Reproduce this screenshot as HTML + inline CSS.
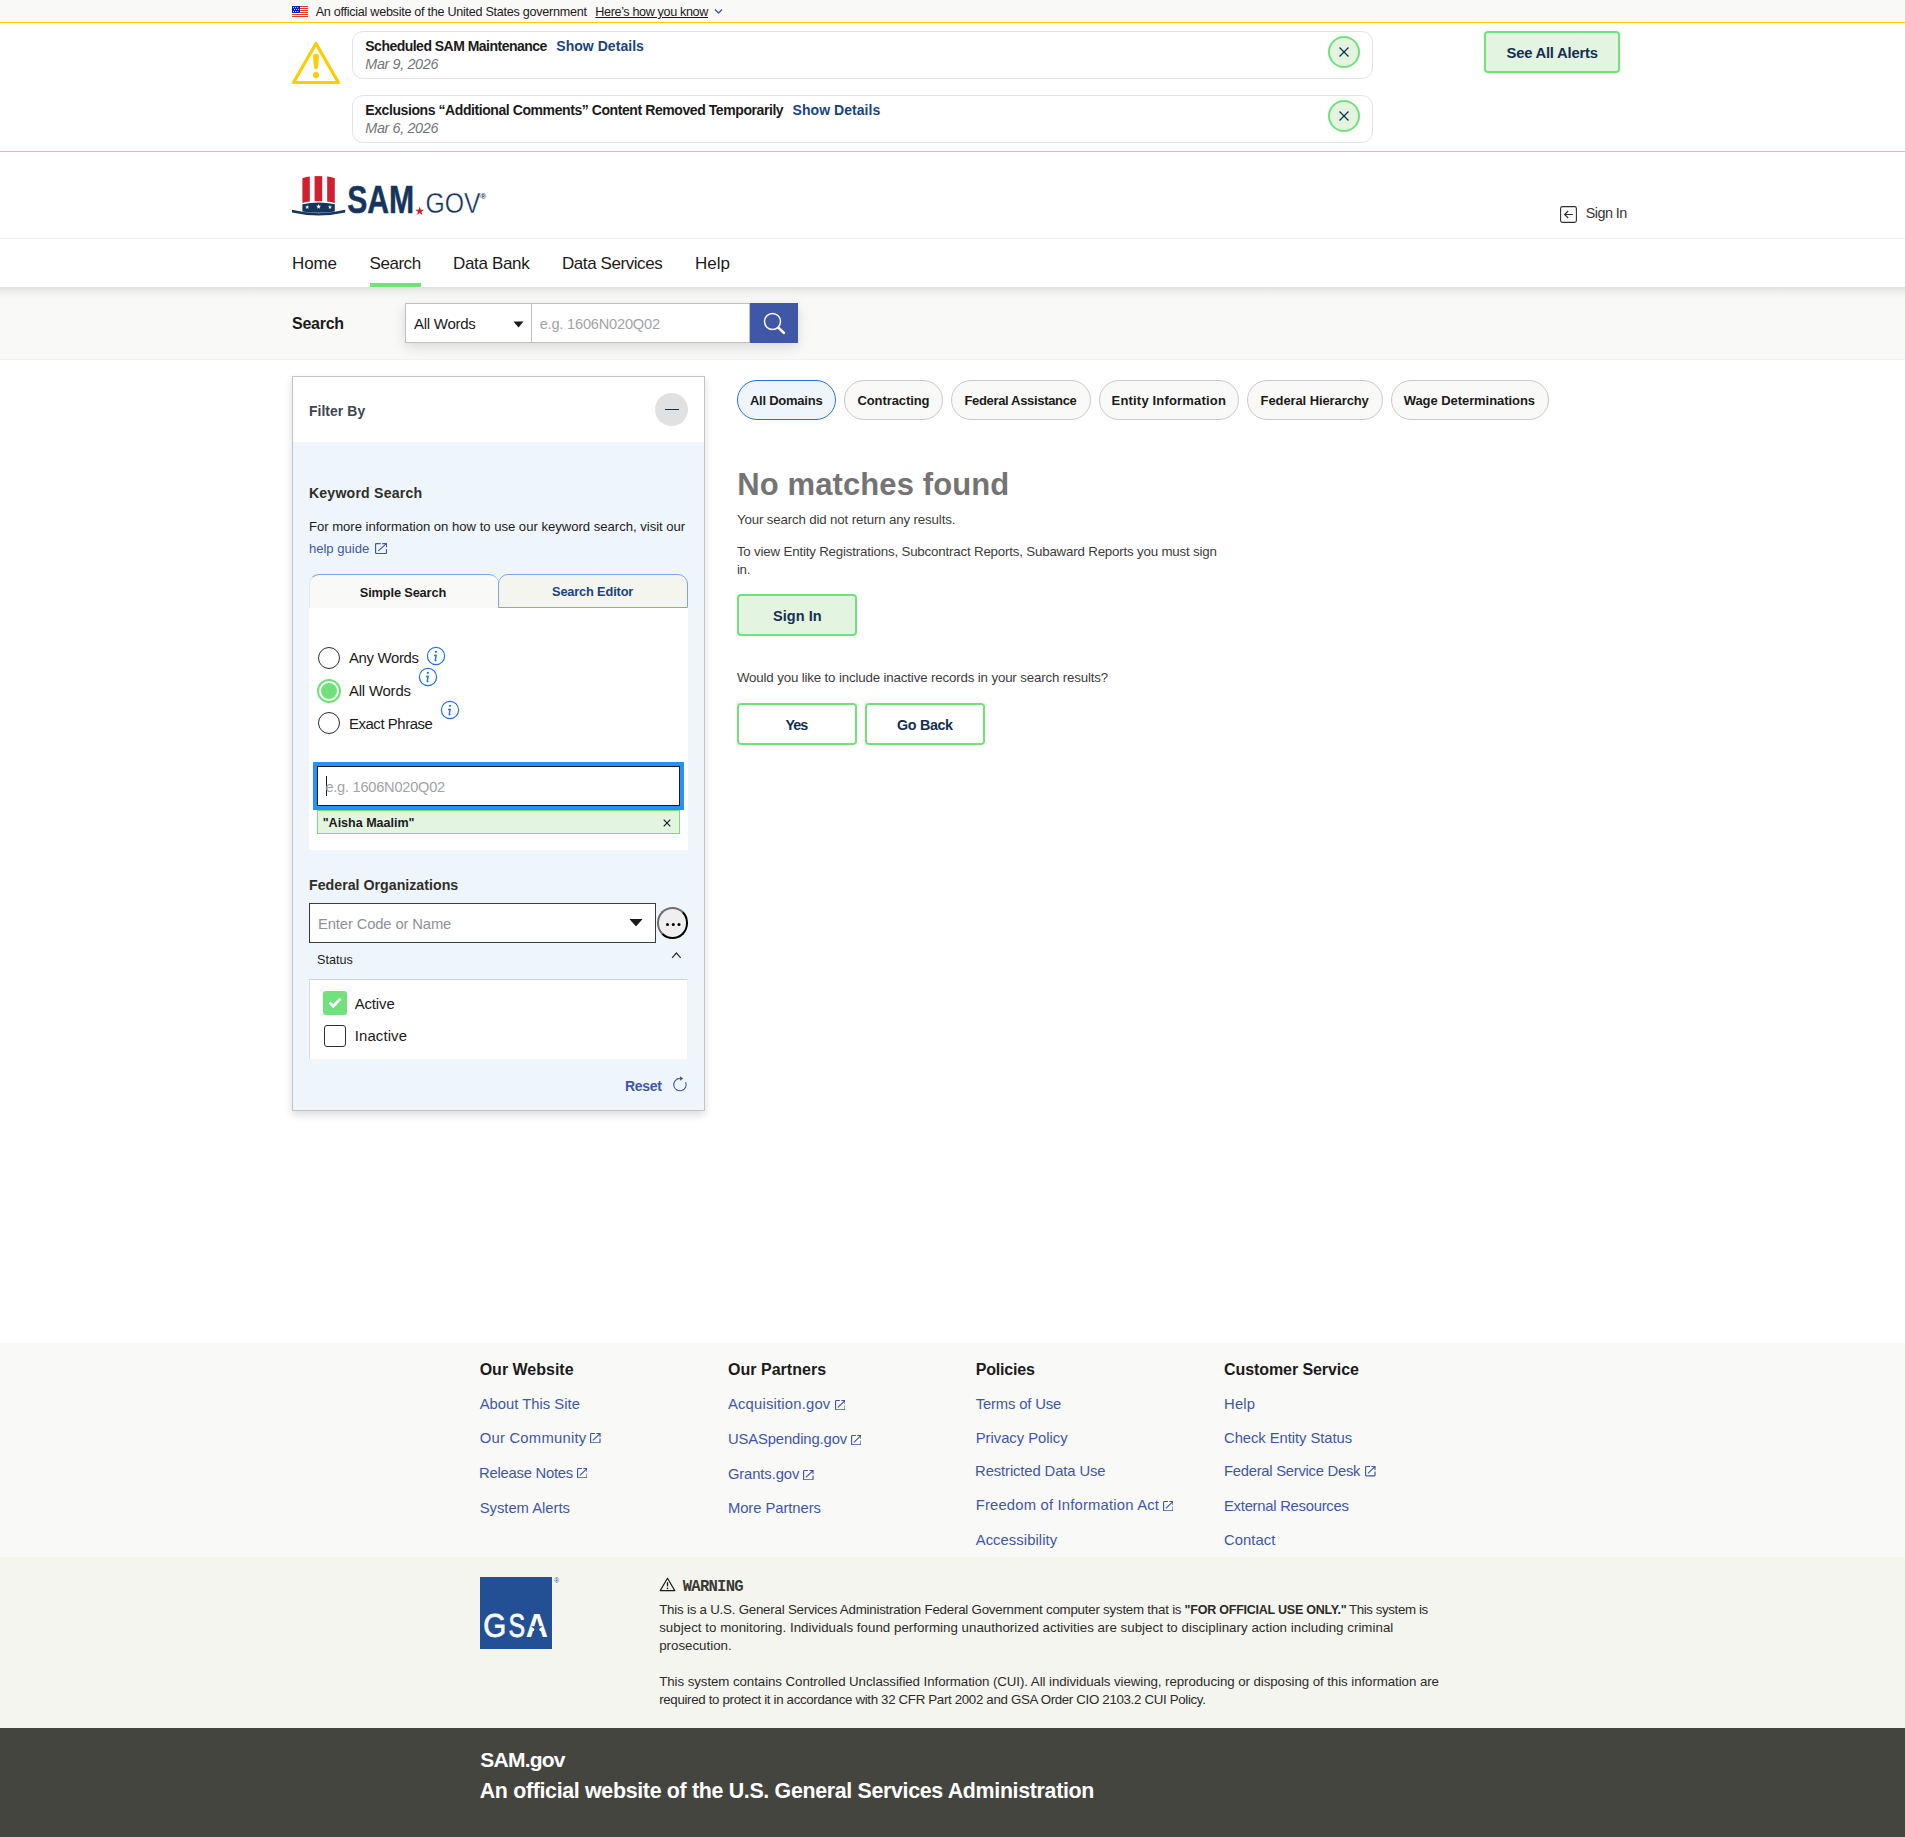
<!DOCTYPE html>
<html lang="en">
<head>
<meta charset="utf-8">
<title>SAM.gov | Search</title>
<style>
*{box-sizing:border-box;margin:0;padding:0}
html,body{width:1905px;height:1837px;overflow:hidden;background:#fff}
body{position:relative;font-family:"Liberation Sans",sans-serif;color:#1b1b1b;font-size:15px;line-height:1}
.a{position:absolute;white-space:nowrap}
.b{font-weight:bold}
.i{font-style:italic}
svg{display:block}
/* banner */
#gov{left:0;top:0;width:1905px;height:22px;background:#f9f9f7}
#govline{left:0;top:22px;width:1905px;height:1px;background:#face00}
#alertline{left:0;top:151px;width:1905px;height:1px;background:#face00}
.alertbox{left:352px;width:1021px;height:48px;border:1px solid #e4e4e4;border-radius:11px;background:#fff}
.xbtn{width:32px;height:32px;border-radius:50%;border:2px solid #70e17b;background:#e3f5e1}
.gbtn{border:2px solid #70e17b;background:#e3f5e1;border-radius:4px;color:#162e51;font-weight:bold;text-align:center}
.wbtn{border:2px solid #70e17b;background:#fff;border-radius:4px;color:#162e51;font-weight:bold;text-align:center}
/* nav */
#hdrline{left:0;top:238px;width:1905px;height:1px;background:#f2f2ef}
#navshadow{left:0;top:287px;width:1905px;height:12px;background:linear-gradient(#e0e0de 0,#eaeae8 28%,#f3f3f1 60%,#f9f9f7 100%)}
#sbar{left:0;top:287px;width:1905px;height:73px;background:#f9f9f7;border-bottom:1px solid #f3f3ee}
.nav{top:254px;font-size:17px;color:#1b1b1b}
.pill{top:380px;height:40px;border-radius:20px;border:1px solid #c9c9c9;background:#f9f9f7}
.pt{font-size:13px;color:#1b1b1b}
.fh{font-size:16px;color:#1b1b1b}
.fl{font-size:14.8px;color:#3f57a6}
.ft{font-size:13.3px;color:#2b2b28}
</style>
</head>
<body>
<!-- ===== gov banner ===== -->
<div class="a" id="gov"></div>
<div class="a" id="govline"></div>
<svg class="a" style="left:292px;top:6px" width="16" height="11" viewBox="0 0 16 11"><rect width="16" height="11" fill="#fff"/><g fill="#db3e1f"><rect y="0" width="16" height="1"/><rect y="2" width="16" height="1"/><rect y="4" width="16" height="1"/><rect y="6" width="16" height="1"/><rect y="8" width="16" height="1"/><rect y="10" width="16" height="1"/></g><rect width="8" height="7" fill="#0b1fae"/><circle cx="1.5" cy="1.6" r="0.55" fill="#fff"/><circle cx="3.6" cy="1.6" r="0.55" fill="#fff"/><circle cx="5.7" cy="1.6" r="0.55" fill="#fff"/><circle cx="2.5" cy="3.5" r="0.55" fill="#fff"/><circle cx="4.6" cy="3.5" r="0.55" fill="#fff"/><circle cx="6.6" cy="3.5" r="0.55" fill="#fff"/><circle cx="1.5" cy="5.5" r="0.55" fill="#fff"/><circle cx="3.6" cy="5.5" r="0.55" fill="#fff"/><circle cx="5.7" cy="5.5" r="0.55" fill="#fff"/></svg>
<span class="a" id="t_gov" style="font-size:12.6px;left:315.7px;top:6.0px;letter-spacing:-0.27px">An official website of the United States government</span>
<span class="a" id="t_how" style="font-size:12.6px;text-decoration:underline;left:595.3px;top:6.0px;letter-spacing:-0.36px">Here’s how you know</span>
<svg class="a" style="left:714px;top:8px" width="9" height="7" viewBox="0 0 9 7"><path d="M1 1.5 L4.5 5 L8 1.5" fill="none" stroke="#3f57a6" stroke-width="1.3"/></svg>

<!-- ===== alerts ===== -->
<div class="a" id="alertline"></div>
<svg class="a" style="left:291px;top:41px" width="50" height="44" viewBox="0 0 50 44"><path d="M25 2.5 L47.4 41.5 H2.5 Z" fill="none" stroke="#face00" stroke-width="3.2" stroke-linejoin="round"/><path d="M22 15.6 Q22 12.7 25 12.7 Q28 12.7 28 15.6 L27 26.4 Q26.9 28.2 25 28.2 Q23.1 28.2 23 26.4 Z" fill="#face00"/><circle cx="25" cy="34.1" r="3.1" fill="#face00"/></svg>
<div class="a alertbox" style="top:31px"></div>
<div class="a alertbox" style="top:95px"></div>
<span class="a b" id="t_al1" style="font-size:14px;left:365.3px;top:39.0px;letter-spacing:-0.52px">Scheduled SAM Maintenance</span>
<span class="a b" id="t_sd1" style="font-size:14px;color:#1a4480;left:556.3px;top:39.0px;letter-spacing:0.04px">Show Details</span>
<span class="a i" id="t_d1" style="font-size:14.4px;color:#71767a;left:365.3px;top:57.0px;letter-spacing:-0.37px">Mar 9, 2026</span>
<span class="a b" id="t_al2" style="font-size:14px;left:365.3px;top:103.0px;letter-spacing:-0.42px">Exclusions “Additional Comments” Content Removed Temporarily</span>
<span class="a b" id="t_sd2" style="font-size:14px;color:#1a4480;left:792.6px;top:103.0px;letter-spacing:0.04px">Show Details</span>
<span class="a i" id="t_d2" style="font-size:14.4px;color:#71767a;left:365.3px;top:121.0px;letter-spacing:-0.37px">Mar 6, 2026</span>
<div class="a xbtn" style="left:1328px;top:36px"></div>
<div class="a xbtn" style="left:1328px;top:100px"></div>
<svg class="a" style="left:1338px;top:46px" width="12" height="12" viewBox="0 0 12 12"><path d="M1.5 1.5 L10.5 10.5 M10.5 1.5 L1.5 10.5" stroke="#162e51" stroke-width="1.3"/></svg>
<svg class="a" style="left:1338px;top:110px" width="12" height="12" viewBox="0 0 12 12"><path d="M1.5 1.5 L10.5 10.5 M10.5 1.5 L1.5 10.5" stroke="#162e51" stroke-width="1.3"/></svg>
<div class="a gbtn" style="left:1484px;top:31px;width:136px;height:42px"></div>
<span class="a b" id="t_see" style="font-size:14.8px;color:#162e51;left:1506.5px;top:46.0px;letter-spacing:-0.22px">See All Alerts</span>

<!-- ===== header ===== -->
<svg class="a" style="left:288px;top:170px" width="210" height="52" viewBox="288 170 210 52">
<path d="M302.4 178.2 Q306 177 309.8 176.6 V201.6 Q306 201.8 302.4 203 Z" fill="#d01f2e"/>
<path d="M314.6 176.1 H322.2 V201.3 H314.6 Z" fill="#d01f2e"/>
<path d="M327.2 176.6 Q331 177 334.8 178.2 V203 Q331 201.8 327.2 201.6 Z" fill="#d01f2e"/>
<path d="M302.4 204.2 Q318.6 200.6 334.8 204.2 V211.4 Q318.6 214.2 302.4 211.4 Z" fill="#15355c"/>
<path d="M292 209.8 Q318.6 216.6 345.2 209.8 V212.6 Q318.6 218.6 292 212.6 Z" fill="#15355c"/>
<path d="M307.20 205.00 L307.72 206.49 L309.29 206.52 L308.04 207.47 L308.49 208.98 L307.20 208.08 L305.91 208.98 L306.36 207.47 L305.11 206.52 L306.68 206.49 Z" fill="#fff"/> <path d="M318.60 204.00 L319.21 205.76 L321.07 205.80 L319.59 206.92 L320.13 208.70 L318.60 207.64 L317.07 208.70 L317.61 206.92 L316.13 205.80 L317.99 205.76 Z" fill="#fff"/> <path d="M330.00 205.00 L330.52 206.49 L332.09 206.52 L330.84 207.47 L331.29 208.98 L330.00 208.08 L328.71 208.98 L329.16 207.47 L327.91 206.52 L329.48 206.49 Z" fill="#fff"/>
<text x="347.2" y="212.6" font-family="'Liberation Sans',sans-serif" font-weight="bold" font-size="39.7" fill="#15355c" stroke="#15355c" stroke-width="0.5" textLength="67" lengthAdjust="spacingAndGlyphs">SAM</text>
<path d="M419.70 206.60 L420.78 209.71 L424.07 209.78 L421.45 211.77 L422.40 214.92 L419.70 213.04 L417.00 214.92 L417.95 211.77 L415.33 209.78 L418.62 209.71 Z" fill="#d01f2e"/>
<text x="425.6" y="212.6" font-family="'Liberation Sans',sans-serif" font-size="30.4" fill="#15355c" stroke="#fff" stroke-width="0.35" textLength="55" lengthAdjust="spacingAndGlyphs">GOV</text>
<text x="480.2" y="199.4" font-family="'Liberation Sans',sans-serif" font-weight="bold" font-size="8" fill="#15355c">®</text>
</svg>
<svg class="a" style="left:1560px;top:206px" width="17" height="17" viewBox="0 0 17 17"><rect x="0.6" y="0.6" width="15.8" height="15.8" rx="1.8" fill="#fff" stroke="#2e2e2e" stroke-width="1.1"/><path d="M12.9 8.5 H4.6 M8.2 5 L4.6 8.5 L8.2 12" fill="none" stroke="#2e2e2e" stroke-width="1.1"/></svg>
<span class="a" id="t_signin" style="color:#363636;font-size:14.4px;left:1585.8px;top:206.0px;letter-spacing:-0.57px">Sign In</span>
<div class="a" id="hdrline"></div>

<!-- ===== nav ===== -->
<span class="a nav" id="t_n1" style="left:292.0px;top:255.0px;letter-spacing:-0.09px">Home</span>
<span class="a nav" id="t_n2" style="left:369.6px;top:255.0px;letter-spacing:-0.47px">Search</span>
<span class="a nav" id="t_n3" style="left:453.0px;top:255.0px;letter-spacing:-0.34px">Data Bank</span>
<span class="a nav" id="t_n4" style="left:562.0px;top:255.0px;letter-spacing:-0.43px">Data Services</span>
<span class="a nav" id="t_n5" style="left:695.0px;top:255.0px;letter-spacing:0.01px">Help</span>
<div class="a" style="left:370px;top:283px;width:51px;height:4px;background:#70e17b"></div>

<!-- ===== search bar ===== -->
<div class="a" id="sbar"></div>
<div class="a" id="navshadow"></div>
<span class="a b" id="t_slabel" style="font-size:16px;left:292.0px;top:316.0px;letter-spacing:-0.26px">Search</span>
<div class="a" style="left:405px;top:303px;width:393px;height:40px;box-shadow:0 4px 12px rgba(0,0,0,.13);background:#fff"></div>
<div class="a" style="left:405px;top:303px;width:127px;height:40px;border:1px solid #bfbfbf;background:#fff"></div>
<div class="a" style="left:531px;top:303px;width:219px;height:40px;border:1px solid #bfbfbf;background:#fff"></div>
<div class="a" style="left:750px;top:303px;width:48px;height:40px;background:#3f57a6"></div>
<span class="a" id="t_allw" style="font-size:15px;left:413.9px;top:316.0px;letter-spacing:-0.24px">All Words</span>
<svg class="a" style="left:513px;top:321px" width="11" height="7" viewBox="0 0 11 7"><path d="M0.5 0.5 H10.5 L5.5 6.5 Z" fill="#1b1b1b"/></svg>
<span class="a" id="t_ph1" style="font-size:14.6px;color:#a0a4a7;left:539.7px;top:317.0px;letter-spacing:-0.20px">e.g. 1606N020Q02</span>
<svg class="a" style="left:762px;top:311px" width="24" height="24" viewBox="0 0 24 24"><circle cx="10.5" cy="10.5" r="8" fill="none" stroke="#fff" stroke-width="1.5"/><path d="M16.3 16.6 L21.9 21.9" stroke="#fff" stroke-width="2.6" stroke-linecap="round"/></svg>

<!-- ===== filter panel ===== -->
<div class="a" style="left:292px;top:376px;width:413px;height:735px;border:1px solid #c4c4c4;background:#eff6fb;box-shadow:0 4px 8px rgba(0,0,0,.14)"></div>
<div class="a" style="left:293px;top:377px;width:411px;height:65px;background:#fff"></div>
<span class="a b" id="t_filterby" style="font-size:13.9px;color:#3d4551;left:308.9px;top:405.0px;letter-spacing:0.08px">Filter By</span>
<div class="a" style="left:655px;top:393px;width:33px;height:33px;border-radius:50%;background:#e1e1e1"></div>
<div class="a" style="left:665px;top:408.9px;width:14px;height:1.1px;background:#162e51"></div>
<span class="a b" id="t_kw" style="font-size:14.1px;color:#2e2e2a;left:308.9px;top:486.0px;letter-spacing:0.22px">Keyword Search</span>
<span class="a" id="t_formore" style="font-size:13.1px;left:308.9px;top:520.0px;letter-spacing:-0.01px">For more information on how to use our keyword search, visit our</span>
<span class="a" id="t_helpguide" style="font-size:13.1px;color:#3f57a6;left:308.9px;top:542.0px;letter-spacing:-0.00px">help guide</span>
<svg class="a" style="left:375px;top:542.9px" width="12.1" height="11.1" viewBox="0 0 12.1 11.1"><path d="M5.69 0.57 H1.48 Q0.57 0.57 0.57 1.48 V9.62 Q0.57 10.53 1.48 10.53 H10.62 Q11.53 10.53 11.53 9.62 V5.88" fill="none" stroke="#3f57a6" stroke-width="1.15"/><path d="M7.26 0.57 H11.53 V4.22 M11.43 0.67 L3.27 7.88" fill="none" stroke="#3f57a6" stroke-width="1.15"/></svg>
<!-- tabs -->
<div class="a" style="left:309px;top:574px;width:190px;height:34px;background:#f9f9f7;border-top:1px solid #7aa6ee;border-left:1px solid #dbe6f7;border-radius:10px 10px 0 0"></div>
<div class="a" style="left:498px;top:574px;width:190px;height:34px;background:#f5f5f0;border:1px solid #7aa6ee;border-radius:10px 10px 0 0"></div>
<span class="a b" id="t_simple" style="font-size:12.8px;left:359.8px;top:587.0px;letter-spacing:-0.15px">Simple Search</span>
<span class="a b" id="t_editor" style="font-size:12.8px;color:#1a4480;left:552.0px;top:586.0px;letter-spacing:-0.16px">Search Editor</span>
<div class="a" style="left:309px;top:608px;width:379px;height:242px;background:#fff"></div>
<!-- radios -->
<div class="a" style="left:318px;top:647px;width:22px;height:22px;border-radius:50%;border:1.3px solid #2e2e2e;background:#fff"></div>
<div class="a" style="left:317px;top:679px;width:24px;height:24px;border-radius:50%;border:2px solid #70e17b;background:#fff"></div>
<div class="a" style="left:321px;top:683px;width:16px;height:16px;border-radius:50%;background:#70e17b"></div>
<div class="a" style="left:318px;top:712px;width:22px;height:22px;border-radius:50%;border:1.3px solid #2e2e2e;background:#fff"></div>
<span class="a" id="t_any" style="font-size:14.9px;left:349.0px;top:651.0px;letter-spacing:-0.32px">Any Words</span>
<span class="a" id="t_all" style="font-size:14.9px;left:349.0px;top:684.0px;letter-spacing:-0.19px">All Words</span>
<span class="a" id="t_exact" style="font-size:14.9px;left:349.0px;top:717.0px;letter-spacing:-0.43px">Exact Phrase</span>
<svg class="a" style="left:426.2px;top:646.2px" width="20" height="20" viewBox="0 0 20 20"><circle cx="10" cy="10" r="8.6" fill="none" stroke="#2672de" stroke-width="1.2"/><circle cx="9.95" cy="5.8" r="1.1" fill="#2672de"/><path d="M8.7 9.5 L10.2 9.1 L9.2 14.3 Q9.2 15 10 14.5" fill="none" stroke="#2672de" stroke-width="1.4" stroke-linecap="round" stroke-linejoin="round"/></svg>
<svg class="a" style="left:418.3px;top:667.2px" width="20" height="20" viewBox="0 0 20 20"><circle cx="10" cy="10" r="8.6" fill="none" stroke="#2672de" stroke-width="1.2"/><circle cx="9.95" cy="5.8" r="1.1" fill="#2672de"/><path d="M8.7 9.5 L10.2 9.1 L9.2 14.3 Q9.2 15 10 14.5" fill="none" stroke="#2672de" stroke-width="1.4" stroke-linecap="round" stroke-linejoin="round"/></svg>
<svg class="a" style="left:440.4px;top:700.3px" width="20" height="20" viewBox="0 0 20 20"><circle cx="10" cy="10" r="8.6" fill="none" stroke="#2672de" stroke-width="1.2"/><circle cx="9.95" cy="5.8" r="1.1" fill="#2672de"/><path d="M8.7 9.5 L10.2 9.1 L9.2 14.3 Q9.2 15 10 14.5" fill="none" stroke="#2672de" stroke-width="1.4" stroke-linecap="round" stroke-linejoin="round"/></svg>
<!-- focused input -->
<div class="a" style="left:313px;top:762px;width:371px;height:48px;background:#2491ff"></div>
<div class="a" style="left:317px;top:766px;width:363px;height:40px;border:1px solid #1b1b1b;background:#fff"></div>
<div class="a" style="left:326px;top:776px;width:1px;height:20px;background:#1b1b1b"></div>
<span class="a" id="t_ph2" style="font-size:14.6px;color:#a0a4a7;left:325.4px;top:780.0px;letter-spacing:-0.24px">e.g. 1606N020Q02</span>
<div class="a" style="left:317px;top:810px;width:363px;height:24px;background:#e3f5e1;border:1px solid #70e17b"></div>
<span class="a b" id="t_chip" style="font-size:12.5px;left:322.7px;top:817.0px;letter-spacing:0.00px">"Aisha Maalim"</span>
<svg class="a" style="left:663px;top:819px" width="8" height="8" viewBox="0 0 8 8"><path d="M0.7 0.7 L7.3 7.3 M7.3 0.7 L0.7 7.3" stroke="#1b1b1b" stroke-width="1.2"/></svg>
<!-- federal orgs -->
<span class="a b" id="t_fedorg" style="font-size:14.2px;color:#2e2e2a;left:309.0px;top:878.0px;letter-spacing:0.01px">Federal Organizations</span>
<div class="a" style="left:309px;top:903px;width:347px;height:40px;border:1px solid #3d3d38;background:#fff"></div>
<span class="a" id="t_entercode" style="font-size:14.8px;color:#8d9297;left:318.0px;top:917.0px;letter-spacing:-0.14px">Enter Code or Name</span>
<svg class="a" style="left:629px;top:917.8px" width="14" height="9" viewBox="0 0 14 9"><path d="M1 1 H13 Q13.6 1 13.2 1.5 L7.4 8 Q7 8.4 6.6 8 L0.8 1.5 Q0.4 1 1 1 Z" fill="#1b1b1b"/></svg>
<div class="a" style="left:657px;top:907px;width:31px;height:31.5px;border-radius:50%;border:2px solid;border-color:#6e6e6e #000 #000 #6e6e6e;background:#efefef"></div>
<div class="a" style="left:665.9px;top:922.5px;width:3.2px;height:3.2px;border-radius:50%;background:#000;box-shadow:5.75px 0 0 #000,11.5px 0 0 #000"></div>
<span class="a" id="t_status" style="font-size:12.6px;left:317.1px;top:954.0px;letter-spacing:-0.02px">Status</span>
<svg class="a" style="left:671px;top:951px" width="12" height="8" viewBox="0 0 12 8"><path d="M1.1 6.8 L5.4 2 L9.7 6.8" fill="none" stroke="#2e2e2a" stroke-width="1.2"/></svg>
<div class="a" style="left:309px;top:979px;width:379px;height:81px;background:#fff;border:1px solid;border-color:#d2d2d2 #f1f3f5 #f4f6f8 #dedede"></div>
<div class="a" style="left:323px;top:991px;width:24px;height:24px;border-radius:3px;background:#70e17b"></div>
<svg class="a" style="left:327px;top:996px" width="16" height="14" viewBox="0 0 16 14"><path d="M2.5 6.5 L6.2 10.2 L13.5 2.8" fill="none" stroke="#fff" stroke-width="2.8"/></svg>
<div class="a" style="left:324px;top:1025px;width:22px;height:22px;border-radius:3px;border:1.3px solid #2e2e2e;background:#fff"></div>
<span class="a" id="t_active" style="font-size:14.9px;left:354.7px;top:997.0px;letter-spacing:-0.11px">Active</span>
<span class="a" id="t_inactive" style="font-size:14.9px;left:354.7px;top:1029.0px;letter-spacing:0.14px">Inactive</span>
<span class="a b" id="t_reset" style="font-size:14px;color:#3f57a6;left:625.0px;top:1079.0px;letter-spacing:-0.31px">Reset</span>
<svg class="a" style="left:671px;top:1075px" width="17" height="18" viewBox="0 0 17 18"><path d="M8.9 3.4 A6.2 6.2 0 1 0 14.6 7.1" fill="none" stroke="#3f57a6" stroke-width="1.1"/><path d="M9 1.2 L12.2 3.5 L9 5.8 Z" fill="#3f57a6"/></svg>

<!-- ===== results ===== -->
<div class="a pill" style="left:737px;width:99px;background:#eff6fb;border-color:#2672de"></div>
<div class="a pill" style="left:844px;width:99px"></div>
<div class="a pill" style="left:951px;width:140px"></div>
<div class="a pill" style="left:1099px;width:140px"></div>
<div class="a pill" style="left:1247px;width:136px"></div>
<div class="a pill" style="left:1391px;width:158px"></div>
<span class="a b pt" id="t_p1" style="left:749.9px;top:394.0px;letter-spacing:-0.24px">All Domains</span>
<span class="a b pt" id="t_p2" style="left:857.4px;top:394.0px;letter-spacing:-0.08px">Contracting</span>
<span class="a b pt" id="t_p3" style="left:964.4px;top:394.0px;letter-spacing:-0.33px">Federal Assistance</span>
<span class="a b pt" id="t_p4" style="left:1111.6px;top:394.0px;letter-spacing:0.18px">Entity Information</span>
<span class="a b pt" id="t_p5" style="left:1260.6px;top:394.0px;letter-spacing:-0.10px">Federal Hierarchy</span>
<span class="a b pt" id="t_p6" style="left:1403.7px;top:394.0px;letter-spacing:-0.06px">Wage Determinations</span>
<span class="a b" id="t_nomatch" style="font-size:31px;color:#747474;left:737.3px;top:469.0px;letter-spacing:0.10px">No matches found</span>
<span class="a" id="t_yoursearch" style="color:#3c3c3c;font-size:13.3px;left:736.9px;top:513.0px;letter-spacing:-0.15px">Your search did not return any results.</span>
<span class="a" id="t_toview" style="color:#3c3c3c;font-size:13.3px;left:736.9px;top:545.0px;letter-spacing:-0.18px">To view Entity Registrations, Subcontract Reports, Subaward Reports you must sign</span>
<span class="a" id="t_in" style="color:#3c3c3c;font-size:13.3px;left:736.9px;top:563.0px;letter-spacing:-0.27px">in.</span>
<div class="a gbtn" style="left:737px;top:594px;width:120px;height:42px"></div>
<span class="a b" id="t_signin2" style="font-size:14.5px;color:#162e51;left:773.0px;top:609.0px;letter-spacing:0.04px">Sign In</span>
<span class="a" id="t_would" style="color:#3c3c3c;font-size:13.3px;left:736.9px;top:671.0px;letter-spacing:-0.15px">Would you like to include inactive records in your search results?</span>
<div class="a wbtn" style="left:737px;top:703px;width:120px;height:42px"></div>
<div class="a wbtn" style="left:865px;top:703px;width:120px;height:42px"></div>
<span class="a b" id="t_yes" style="font-size:14.3px;color:#162e51;left:785.6px;top:718.0px;letter-spacing:-1.03px">Yes</span>
<span class="a b" id="t_goback" style="font-size:14.3px;color:#162e51;left:897.1px;top:718.0px;letter-spacing:-0.34px">Go Back</span>

<!-- ===== footer ===== -->
<div class="a" style="left:0;top:1343px;width:1905px;height:214px;background:#f9f9f7"></div>
<div class="a" style="left:0;top:1557px;width:1905px;height:171px;background:#f5f5f0"></div>
<div class="a" style="left:0;top:1728px;width:1905px;height:109px;background:#454540"></div>
<span class="a b fh" id="t_fh1" style="left:479.7px;top:1362.0px;letter-spacing:-0.01px">Our Website</span>
<span class="a b fh" id="t_fh2" style="left:727.9px;top:1362.0px;letter-spacing:0.04px">Our Partners</span>
<span class="a b fh" id="t_fh3" style="left:975.7px;top:1362.0px;letter-spacing:-0.17px">Policies</span>
<span class="a b fh" id="t_fh4" style="left:1224.0px;top:1362.0px;letter-spacing:-0.08px">Customer Service</span>
<span class="a fl" id="t_l11" style="left:479.7px;top:1397.0px;letter-spacing:0.01px">About This Site</span>
<span class="a fl" id="t_l12" style="left:479.7px;top:1431.0px;letter-spacing:0.24px">Our Community</span>
<span class="a fl" id="t_l13" style="left:479.1px;top:1466.0px;letter-spacing:-0.25px">Release Notes</span>
<span class="a fl" id="t_l14" style="left:479.7px;top:1501.0px;letter-spacing:-0.02px">System Alerts</span>
<span class="a fl" id="t_l21" style="left:727.9px;top:1397.0px;letter-spacing:0.20px">Acquisition.gov</span>
<span class="a fl" id="t_l22" style="left:727.9px;top:1432.0px;letter-spacing:-0.12px">USASpending.gov</span>
<span class="a fl" id="t_l23" style="left:727.9px;top:1467.0px;letter-spacing:-0.11px">Grants.gov</span>
<span class="a fl" id="t_l24" style="left:727.9px;top:1501.0px;letter-spacing:-0.06px">More Partners</span>
<span class="a fl" id="t_l31" style="left:975.7px;top:1397.0px;letter-spacing:-0.14px">Terms of Use</span>
<span class="a fl" id="t_l32" style="left:975.7px;top:1431.0px;letter-spacing:-0.01px">Privacy Policy</span>
<span class="a fl" id="t_l33" style="left:975.1px;top:1464.0px;letter-spacing:-0.11px">Restricted Data Use</span>
<span class="a fl" id="t_l34" style="left:975.7px;top:1498.0px;letter-spacing:0.19px">Freedom of Information Act</span>
<span class="a fl" id="t_l35" style="left:975.7px;top:1533.0px;letter-spacing:0.07px">Accessibility</span>
<span class="a fl" id="t_l41" style="left:1224.0px;top:1397.0px;letter-spacing:0.19px">Help</span>
<span class="a fl" id="t_l42" style="left:1224.0px;top:1431.0px;letter-spacing:-0.06px">Check Entity Status</span>
<span class="a fl" id="t_l43" style="left:1224.0px;top:1464.0px;letter-spacing:-0.26px">Federal Service Desk</span>
<span class="a fl" id="t_l44" style="left:1224.0px;top:1499.0px;letter-spacing:-0.25px">External Resources</span>
<span class="a fl" id="t_l45" style="left:1224.0px;top:1533.0px;letter-spacing:0.07px">Contact</span>
<svg class="a" style="left:590.2px;top:1433px" width="10.6" height="10.4" viewBox="0 0 10.1 10.4" preserveAspectRatio="none"><path d="M4.75 0.55 H1.45 Q0.55 0.55 0.55 1.45 V8.95 Q0.55 9.85 1.45 9.85 H8.65 Q9.55 9.85 9.55 8.95 V5.51" fill="none" stroke="#3f57a6" stroke-width="1.1"/><path d="M6.06 0.55 H9.55 V3.95 M9.45 0.65 L2.73 7.38" fill="none" stroke="#3f57a6" stroke-width="1.1"/></svg>
<svg class="a" style="left:576.8px;top:1467.7px" width="10.6" height="10.4" viewBox="0 0 10.1 10.4" preserveAspectRatio="none"><path d="M4.75 0.55 H1.45 Q0.55 0.55 0.55 1.45 V8.95 Q0.55 9.85 1.45 9.85 H8.65 Q9.55 9.85 9.55 8.95 V5.51" fill="none" stroke="#3f57a6" stroke-width="1.1"/><path d="M6.06 0.55 H9.55 V3.95 M9.45 0.65 L2.73 7.38" fill="none" stroke="#3f57a6" stroke-width="1.1"/></svg>
<svg class="a" style="left:834.6px;top:1399.6px" width="10.6" height="10.4" viewBox="0 0 10.1 10.4" preserveAspectRatio="none"><path d="M4.75 0.55 H1.45 Q0.55 0.55 0.55 1.45 V8.95 Q0.55 9.85 1.45 9.85 H8.65 Q9.55 9.85 9.55 8.95 V5.51" fill="none" stroke="#3f57a6" stroke-width="1.1"/><path d="M6.06 0.55 H9.55 V3.95 M9.45 0.65 L2.73 7.38" fill="none" stroke="#3f57a6" stroke-width="1.1"/></svg>
<svg class="a" style="left:850.7px;top:1434.7px" width="10.6" height="10.4" viewBox="0 0 10.1 10.4" preserveAspectRatio="none"><path d="M4.75 0.55 H1.45 Q0.55 0.55 0.55 1.45 V8.95 Q0.55 9.85 1.45 9.85 H8.65 Q9.55 9.85 9.55 8.95 V5.51" fill="none" stroke="#3f57a6" stroke-width="1.1"/><path d="M6.06 0.55 H9.55 V3.95 M9.45 0.65 L2.73 7.38" fill="none" stroke="#3f57a6" stroke-width="1.1"/></svg>
<svg class="a" style="left:803.4px;top:1469.6px" width="10.6" height="10.4" viewBox="0 0 10.1 10.4" preserveAspectRatio="none"><path d="M4.75 0.55 H1.45 Q0.55 0.55 0.55 1.45 V8.95 Q0.55 9.85 1.45 9.85 H8.65 Q9.55 9.85 9.55 8.95 V5.51" fill="none" stroke="#3f57a6" stroke-width="1.1"/><path d="M6.06 0.55 H9.55 V3.95 M9.45 0.65 L2.73 7.38" fill="none" stroke="#3f57a6" stroke-width="1.1"/></svg>
<svg class="a" style="left:1162.9px;top:1500.6px" width="10.6" height="10.4" viewBox="0 0 10.1 10.4" preserveAspectRatio="none"><path d="M4.75 0.55 H1.45 Q0.55 0.55 0.55 1.45 V8.95 Q0.55 9.85 1.45 9.85 H8.65 Q9.55 9.85 9.55 8.95 V5.51" fill="none" stroke="#3f57a6" stroke-width="1.1"/><path d="M6.06 0.55 H9.55 V3.95 M9.45 0.65 L2.73 7.38" fill="none" stroke="#3f57a6" stroke-width="1.1"/></svg>
<svg class="a" style="left:1365px;top:1466.4px" width="10.6" height="10.4" viewBox="0 0 10.1 10.4" preserveAspectRatio="none"><path d="M4.75 0.55 H1.45 Q0.55 0.55 0.55 1.45 V8.95 Q0.55 9.85 1.45 9.85 H8.65 Q9.55 9.85 9.55 8.95 V5.51" fill="none" stroke="#3f57a6" stroke-width="1.1"/><path d="M6.06 0.55 H9.55 V3.95 M9.45 0.65 L2.73 7.38" fill="none" stroke="#3f57a6" stroke-width="1.1"/></svg>
<svg class="a" style="left:480px;top:1577px" width="84" height="72" viewBox="480 1577 84 72"><rect x="480" y="1577" width="72" height="72" fill="#235094"/><text y="1637" font-family="'Liberation Sans',sans-serif" font-size="33.4" fill="#f8f8f4" stroke="#f8f8f4" stroke-width="0.8"><tspan x="483.2" textLength="23" lengthAdjust="spacingAndGlyphs">G</tspan><tspan x="508.6" textLength="16.6" lengthAdjust="spacingAndGlyphs">S</tspan><tspan x="525.8" font-weight="bold" stroke-width="0" textLength="22.2" lengthAdjust="spacingAndGlyphs">A</tspan></text><path d="M536.80 1622.00 L538.26 1626.19 L542.70 1626.28 L539.16 1628.97 L540.44 1633.22 L536.80 1630.68 L533.16 1633.22 L534.44 1628.97 L530.90 1626.28 L535.34 1626.19 Z" fill="#235094"/><path d="M526 1637.5 L539 1631.2 L540 1633.2 L531 1637.5 Z" fill="#235094" opacity="0"/><text x="554.3" y="1582.6" font-family="'Liberation Sans',sans-serif" font-size="6.5" fill="#235094">®</text></svg>
<svg class="a" style="left:658.6px;top:1577.4px" width="17" height="14.6" viewBox="0 0 17 14" preserveAspectRatio="none"><path d="M8.5 1.2 L15.8 13 H1.2 Z" fill="none" stroke="#1b1b1b" stroke-width="1.2" stroke-linejoin="round"/><path d="M8.5 5 V9" stroke="#1b1b1b" stroke-width="1.3"/><circle cx="8.5" cy="10.9" r="0.8" fill="#1b1b1b"/></svg>
<span class="a b" id="t_warning" style="font-size:15.6px;font-family:'Liberation Mono',monospace;color:#3a3a35;left:682.8px;top:1580.0px;letter-spacing:-0.79px">WARNING</span>
<span class="a ft" id="t_w1a" style="left:659.2px;top:1603.0px;letter-spacing:-0.22px">This is a U.S. General Services Administration Federal Government computer system that is </span>
<span class="a ft b" id="t_w1b" style="font-size:12.5px;left:1184.6px;top:1604.0px;letter-spacing:-0.23px">"FOR OFFICIAL USE ONLY."</span>
<span class="a ft" id="t_w1c" style="left:1348.9px;top:1603.0px;letter-spacing:-0.38px">This system is</span>
<span class="a ft" id="t_w2" style="left:659.2px;top:1621.0px;letter-spacing:0.03px">subject to monitoring. Individuals found performing unauthorized activities are subject to disciplinary action including criminal</span>
<span class="a ft" id="t_w3" style="left:659.2px;top:1639.0px;letter-spacing:-0.00px">prosecution.</span>
<span class="a ft" id="t_w4" style="left:659.2px;top:1675.0px;letter-spacing:-0.07px">This system contains Controlled Unclassified Information (CUI). All individuals viewing, reproducing or disposing of this information are</span>
<span class="a ft" id="t_w5" style="left:659.2px;top:1693.0px;letter-spacing:-0.33px">required to protect it in accordance with 32 CFR Part 2002 and GSA Order CIO 2103.2 CUI Policy.</span>
<span class="a b" id="t_samgov" style="font-size:21px;color:#fff;left:480.3px;top:1749.0px;letter-spacing:-0.77px">SAM.gov</span>
<span class="a b" id="t_official" style="font-size:21.4px;color:#fff;left:479.7px;top:1781.0px;letter-spacing:-0.33px">An official website of the U.S. General Services Administration</span>

</body>
</html>
